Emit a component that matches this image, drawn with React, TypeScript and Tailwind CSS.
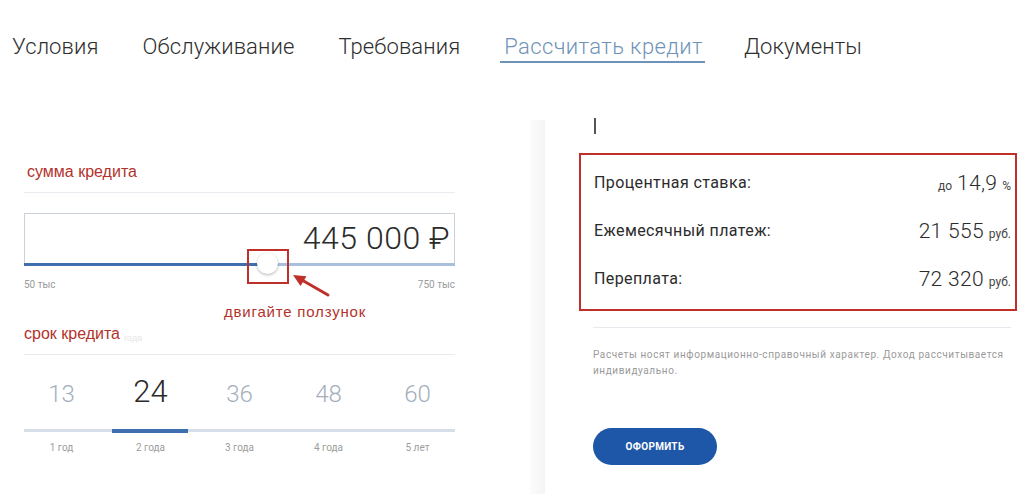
import React from "react";

const tabs = ["Условия", "Обслуживание", "Требования", "Рассчитать кредит", "Документы"];

const terms = [
    { n: "13", label: "1 год" },
    { n: "24", label: "2 года" },
    { n: "36", label: "3 года" },
    { n: "48", label: "4 года" },
    { n: "60", label: "5 лет" },
];

const results = [
    { label: "Процентная ставка:", pre: "до", value: "14,9", unit: "%" },
    { label: "Ежемесячный платеж:", pre: "", value: "21 555", unit: "руб." },
    { label: "Переплата:", pre: "", value: "72 320", unit: "руб." },
];

export default function App() {
    return (
        <div className="w-[1024px] h-[494px] overflow-hidden bg-white font-['Roboto',sans-serif] text-[#333]">
            {/* вкладки */}
            <nav className="flex items-start gap-[44px] pl-[12px] pt-[34px] h-[70px]">
                {tabs.map((t, i) => (
                    <div
                        key={t}
                        className={
                            i === 3
                                ? "text-[22px] leading-[26px] font-light tracking-[0.4px] text-[#6f93b8] border-b-2 border-[#6f93b8] pb-[1px] pl-[4px] -ml-[4px] pr-[2px] -mr-[5px]"
                                : "text-[22px] leading-[26px] font-light tracking-[0.1px] text-[#2e2e2e]"
                        }
                    >
                        {t}
                    </div>
                ))}
            </nav>

            <div className="flex">
                {/* калькулятор */}
                <div className="w-[431px] ml-[24px] relative">
                    <div className="mt-[92px] pb-[10px] border-b border-[#e8ecf0] font-['Liberation_Sans',sans-serif] text-[16px] leading-[20px] text-[#b3322b] pl-[3px]">
                        сумма кредита
                    </div>

                    <div className="relative mt-[20px]">
                        <div className="h-[50px] border border-b-0 border-[#c9d1db] flex items-end justify-end pr-[4px] pb-[6px]">
                            <span className="text-[32px] leading-[38px] font-light text-[#2b2b2b] tracking-[0.5px]">445 000 ₽</span>
                        </div>
                        <div className="flex h-[3px]">
                            <div className="w-[243px] bg-[#3f6fae]" />
                            <div className="flex-1 bg-[#a9bfdf]" />
                        </div>
                        {/* ползунок */}
                        <div className="absolute left-[233px] top-[40px] w-[21px] h-[21px] rounded-full bg-white shadow-[0_1px_3px_rgba(0,0,0,0.3)]" />
                        {/* выделение */}
                        <div className="absolute left-[223px] top-[36px] w-[42px] h-[35px] border-2 border-[#c0302a]" />
                        <svg className="absolute left-[264px] top-[58px]" width="44" height="30" viewBox="0 0 44 30">
                            <line x1="40" y1="24" x2="13" y2="8.5" stroke="#c0302a" strokeWidth="3" strokeLinecap="round" />
                            <polygon points="5,4 18.5,5.2 12.5,15" fill="#c0302a" />
                        </svg>
                    </div>

                    <div className="flex justify-between mt-[13px] text-[10px] leading-[12px] text-[#9a9a9a]">
                        <span>50 тыс</span>
                        <span>750 тыс</span>
                    </div>

                    <div className="mt-[12px] pl-[200px] font-['Liberation_Sans',sans-serif] text-[15px] leading-[18px] text-[#b3322b] tracking-[0.8px]">
                        двигайте ползунок
                    </div>

                    <div className="mt-[3px] pb-[10px] border-b border-[#e8ecf0] font-['Liberation_Sans',sans-serif] text-[16px] leading-[20px] text-[#b3322b] flex items-end">
                        срок кредита
                        <span className="ml-[4px] text-[9px] leading-[12px] text-[#e6e6e6]">года</span>
                    </div>

                    <div className="-mx-[7px] mt-[17px] grid grid-cols-5">
                        {terms.map((t, i) => (
                            <div key={t.n} className="flex items-end justify-center h-[38px]">
                                <span
                                    className={
                                        i === 1
                                            ? "text-[31px] leading-[36px] font-light text-[#2b2b2b]"
                                            : "text-[24px] leading-[32px] font-light text-[#a4afbc]"
                                    }
                                >
                                    {t.n}
                                </span>
                            </div>
                        ))}
                    </div>

                    <div className="mt-[19px] h-[3px] bg-[#d6dee8] flex items-center">
                        <div className="ml-[88px] w-[76px] h-[4px] bg-[#3f6fae]" />
                    </div>

                    <div className="-mx-[7px] mt-[10px] grid grid-cols-5 text-[10px] leading-[12px] text-[#9d9d9d]">
                        {terms.map((t) => (
                            <div key={t.label} className="text-center">{t.label}</div>
                        ))}
                    </div>
                </div>

                {/* тень между колонками */}
                <div className="ml-[75px] mt-[50px] w-[15px] h-[380px] bg-gradient-to-r from-[#fcfcfc] to-[#f4f4f4]" />

                {/* результаты */}
                <div className="ml-[34px] w-[438px]">
                    <div className="ml-[15px] mt-[48px] w-[2px] h-[16px] bg-[#555]" />

                    <div className="mt-[19px] border-2 border-[#c0302a] pl-[13px] pr-[4px] pt-[4px] pb-[6px]">
                        {results.map((r) => (
                            <div key={r.label} className="flex items-center justify-between h-[48px]">
                                <span className="text-[16px] leading-[20px] tracking-[0.4px] text-[#2b2b2b]">{r.label}</span>
                                <span className="flex items-baseline gap-[5px]">
                                    {r.pre && <span className="text-[12px] text-[#444]">{r.pre}</span>}
                                    <span className="text-[21px] leading-[26px] font-light text-[#2b2b2b] tracking-[0.3px]">{r.value}</span>
                                    <span className="text-[12px] text-[#444]">{r.unit}</span>
                                </span>
                            </div>
                        ))}
                    </div>

                    <div className="ml-[14px] mr-[6px] mt-[16px] border-t border-[#e6e9ee]" />

                    <p className="ml-[14px] mt-[19px] text-[10px] leading-[16px] text-[#9a9a9a] tracking-[0.6px] w-[422px]">
                        Расчеты носят информационно-справочный характер. Доход рассчитывается индивидуально.
                    </p>

                    <button className="ml-[14px] mt-[49px] w-[124px] h-[37px] rounded-full bg-[#1e56a8] text-white text-[10px] font-bold tracking-[0.3px]">
                        ОФОРМИТЬ
                    </button>
                </div>
            </div>
        </div>
    );
}
